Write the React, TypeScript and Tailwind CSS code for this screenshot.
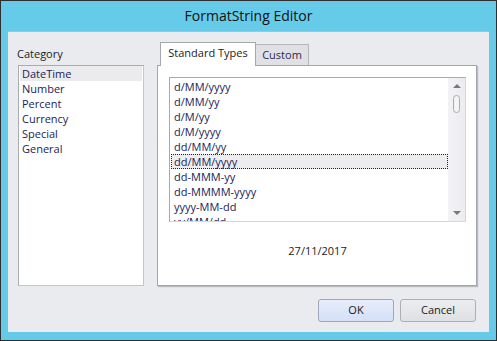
const categories = ['DateTime', 'Number', 'Percent', 'Currency', 'Special', 'General'];

const formats = [
  'd/MM/yyyy',
  'd/MM/yy',
  'd/M/yy',
  'd/M/yyyy',
  'dd/MM/yy',
  'dd/MM/yyyy',
  'dd-MMM-yy',
  'dd-MMMM-yyyy',
  'yyyy-MM-dd',
  'yy/MM/dd',
];

export default function App() {
  return (
    <div
      className="w-[497px] h-[341px] bg-[#65cbe9] border border-[#2e2e2e] flex flex-col text-[11px] text-[#1b1b1b]"
      style={{ fontFamily: '"Open Sans", "Noto Sans", sans-serif' }}
    >
      <div className="h-[30px] flex items-center justify-center text-[14px] text-[#111] pb-[1px]">
        FormatString Editor
      </div>

      <div className="mx-[7px] h-[301px] bg-[#eaebef] border-t border-[#a8c0d0] flex flex-col">
        <div className="flex mt-[11px] h-[243px]">
          {/* category list */}
          <div className="ml-[10px] w-[126px] flex flex-col">
            <div className="h-[22px] pt-[3px] leading-[16px] -ml-[1px]">Category</div>
            <div className="flex-1 bg-white border border-[#c4c6cc] border-t-[#a9abb2] border-l-[#a9abb2] px-[1px]">
              {categories.map((c, i) => (
                <div
                  key={c}
                  className={`h-[15px] leading-[15px] pl-[2px] text-[#1c1c58] ${i === 0 ? 'bg-[#ebebed]' : ''}`}
                >
                  {c}
                </div>
              ))}
            </div>
          </div>

          {/* tabs */}
          <div className="ml-[13px] w-[321px] flex flex-col">
            <div className="h-[22px] flex items-end pl-[3px]">
              <div className="relative z-10 h-[24px] -mb-[1px] w-[96px] bg-white border border-b-0 border-[#a5a7ae] flex items-center justify-center pb-[2px]">
                Standard Types
              </div>
              <div className="h-[21px] w-[53px] bg-[#e0e1e5] border border-l-0 border-b-0 border-[#b5b7bd] flex items-center justify-center text-[#2a2a50] pt-[1px]">
                Custom
              </div>
            </div>
            <div className="h-[221px] w-[320px] bg-white border border-[#a3a5ac] shadow-[1px_1px_1px_#b8bac0] pt-[11px] pl-[11px] pr-[10px] flex flex-col">
              <div className="h-[145px] border border-[#a8aab2] border-r-[#d6d7dc] border-b-[#d6d7dc] flex">
                <div className="flex-1 overflow-hidden pt-[1px] pl-[1px]">
                  {formats.map((f, i) => (
                    <div
                      key={f}
                      className={`h-[15px] leading-[15px] pl-[3px] text-[#1c1c58] ${
                        i === 5 ? 'bg-[#ededef] outline-1 outline-dotted outline-[#222] -outline-offset-1' : ''
                      }`}
                    >
                      {f}
                    </div>
                  ))}
                </div>
                <div className="w-[17px] bg-[linear-gradient(to_right,#f3f3f6,#ececf0)] flex flex-col items-center pt-[6px] pb-[6px]">
                  <div className="w-0 h-0 border-l-[4px] border-r-[4px] border-b-[4px] border-l-transparent border-r-transparent border-b-[#77787e]" />
                  <div className="mt-[7px] w-[7px] h-[18px] rounded-[4px] border border-[#a8aab2] bg-[#f4f4f6]" />
                  <div className="flex-1" />
                  <div className="w-0 h-0 border-l-[4px] border-r-[4px] border-t-[4px] border-l-transparent border-r-transparent border-t-[#77787e]" />
                </div>
              </div>
              <div className="flex-1 flex items-center justify-center pb-[4px] text-[#1b1b1b]">27/11/2017</div>
            </div>
          </div>
        </div>

        <div className="flex justify-end gap-[6px] mt-[13px] mr-[13px]">
          <button className="w-[76px] h-[23px] rounded-[3px] border border-[#9fa7bf] bg-[linear-gradient(#e6edfb,#d5e0f7)] text-[#1b1b1b]">
            OK
          </button>
          <button className="w-[76px] h-[23px] rounded-[3px] border border-[#adafb5] bg-[linear-gradient(#ededef,#dfe0e3)] text-[#1b1b1b]">
            Cancel
          </button>
        </div>
      </div>
    </div>
  );
}
